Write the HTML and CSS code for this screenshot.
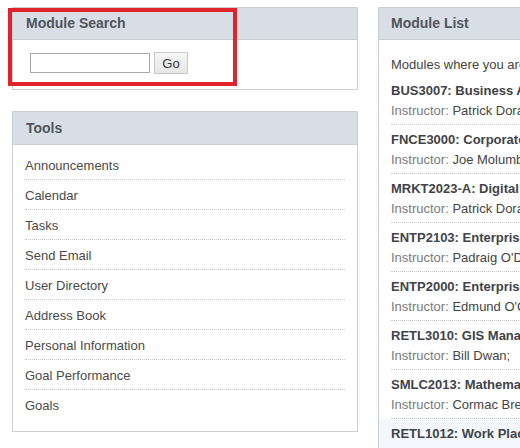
FILE: index.html
```html
<!DOCTYPE html>
<html>
<head>
<meta charset="utf-8">
<link rel="stylesheet" href="styles.css">
</head>
<body>
<div class="page">
  <div class="col-left">
    <div class="panel search-panel">
      <div class="panel-head">Module Search</div>
      <div class="search-body">
        <input class="search-input" type="text">
        <button class="go-btn">Go</button>
      </div>
      <div class="highlight"></div>
    </div>
    <div class="panel">
      <div class="panel-head tools-head">Tools</div>
      <ul class="tools">
        <li>Announcements</li>
        <li>Calendar</li>
        <li>Tasks</li>
        <li>Send Email</li>
        <li>User Directory</li>
        <li>Address Book</li>
        <li>Personal Information</li>
        <li>Goal Performance</li>
        <li>Goals</li>
      </ul>
    </div>
  </div>
  <div class="col-right">
    <div class="panel module-panel">
      <div class="panel-head module-head">Module List</div>
      <p class="intro">Modules where you are: Instructor</p>
      <ul class="modules">
        <li><div class="m-wrap"><div class="m-title">BUS3007: Business Analytics</div><div class="m-inst"><span class="lbl">Instructor:</span> Patrick Doran;</div></div></li>
        <li><div class="m-wrap"><div class="m-title">FNCE3000: Corporate Finance</div><div class="m-inst"><span class="lbl">Instructor:</span> Joe Molumby;</div></div></li>
        <li><div class="m-wrap"><div class="m-title">MRKT2023-A: Digital Marketing</div><div class="m-inst"><span class="lbl">Instructor:</span> Patrick Doran;</div></div></li>
        <li><div class="m-wrap"><div class="m-title">ENTP2103: Enterprise Development</div><div class="m-inst"><span class="lbl">Instructor:</span> Padraig O'Dea;</div></div></li>
        <li><div class="m-wrap"><div class="m-title">ENTP2000: Enterprise Studies</div><div class="m-inst"><span class="lbl">Instructor:</span> Edmund O'Connor;</div></div></li>
        <li><div class="m-wrap"><div class="m-title">RETL3010: GIS Management</div><div class="m-inst"><span class="lbl">Instructor:</span> Bill Dwan;</div></div></li>
        <li><div class="m-wrap"><div class="m-title">SMLC2013: Mathematics</div><div class="m-inst"><span class="lbl">Instructor:</span> Cormac Breen;</div></div></li>
        <li class="hover"><div class="m-wrap"><div class="m-title">RETL1012: Work Placement</div><div class="m-inst"><span class="lbl">Instructor:</span> Bill Dwan;</div></div></li>
      </ul>
    </div>
  </div>
</div>
</body>
</html>
```

FILE: styles.css
```css
html, body {
  margin: 0;
  padding: 0;
  background: #ffffff;
  overflow: hidden;
  width: 520px;
  height: 448px;
}
body {
  font-family: "Liberation Sans", Arial, sans-serif;
  font-size: 13px;
  color: #444;
}
.page {
  display: flex;
  gap: 20px;
  padding: 7px 0 0 12px;
  width: 800px;
}
.col-left {
  width: 346px;
  display: flex;
  flex-direction: column;
  gap: 21px;
}
.col-right {
  width: 346px;
  flex: none;
}
.panel {
  border: 1px solid #cbcfd4;
  background: #fff;
  position: relative;
}
.panel-head {
  background: #d8dee6;
  border-bottom: 1px solid #cbcfd4;
  height: 31px;
  line-height: 31px;
  padding: 0 13px;
  font-weight: bold;
  font-size: 14px;
  color: #50555c;
}
.module-head {
  padding: 0 12px;
}
.tools-head {
  height: 32px;
  line-height: 32px;
}
.search-panel {
  height: 81px;
}
.search-body {
  display: flex;
  align-items: center;
  gap: 4px;
  padding: 12px 0 0 17px;
}
.search-input {
  width: 120px;
  height: 20px;
  box-sizing: border-box;
  border: 1px solid #a9a9a9;
  margin: 0;
  padding: 0;
  background: #fff;
}
.go-btn {
  width: 34px;
  height: 22px;
  box-sizing: border-box;
  border: 1px solid #c9c9c9;
  background: linear-gradient(#f7f7f7, #e6e6e6);
  font-family: "Liberation Sans", Arial, sans-serif;
  font-size: 13px;
  color: #333;
  padding: 0;
  margin: 0;
}
.highlight {
  position: absolute;
  left: -5px;
  top: 0px;
  width: 221px;
  height: 70px;
  border: 4px solid #e1232b;
}
.tools {
  list-style: none;
  margin: 0;
  padding: 5px 12px 11px 12px;
}
.tools li {
  height: 30px;
  line-height: 30px;
  border-bottom: 1px dotted #c4c4c4;
  box-sizing: border-box;
  color: #4a4a4a;
  padding-top: 1px;
}
.tools li:last-child {
  border-bottom: none;
}
.module-panel {
  height: 460px;
}
.intro {
  margin: 0;
  padding: 16px 12px 0 12px;
  line-height: 18px;
  color: #444;
  white-space: nowrap;
}
.modules {
  list-style: none;
  margin: 0;
  padding: 0;
}
.modules li {
  padding: 0 12px;
  white-space: nowrap;
}
.m-wrap {
  padding: 5px 0 3px 0;
  border-bottom: 1px dotted #c4c4c4;
}
.modules li:first-child .m-wrap {
  padding-top: 7px;
}
.modules li.hover {
  background: #f3f7fb;
}
.m-title {
  font-weight: bold;
  color: #3f4349;
  line-height: 20px;
}
.m-inst {
  line-height: 20px;
  color: #444;
}
.lbl {
  color: #7a7a7a;
}
```
